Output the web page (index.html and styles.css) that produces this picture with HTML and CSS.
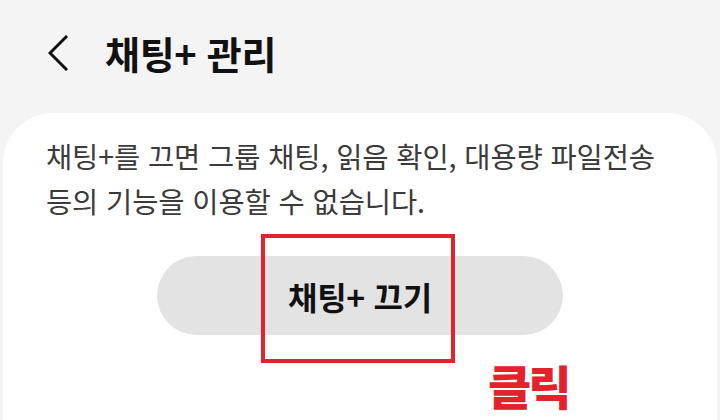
FILE: index.html
```html
<!DOCTYPE html>
<html lang="ko">
<head>
<meta charset="utf-8">
<link rel="stylesheet" href="styles.css">
</head>
<body>
<header class="topbar">
  <svg class="back" width="20" height="36" viewBox="0 0 20 36"><path d="M18 2 L2 18 L18 34" fill="none" stroke="#111" stroke-width="3" stroke-linecap="square" stroke-linejoin="miter"/></svg>
  <h1 class="title">채팅+ 관리</h1>
</header>
<main class="card">
  <p class="desc">채팅+를 끄면 그룹 채팅, 읽음 확인, 대용량 파일전송<br>등의 기능을 이용할 수 없습니다.</p>
  <div class="action">
    <button class="pill">채팅+ 끄기</button>
    <div class="mark"></div>
    <div class="click">클릭</div>
  </div>
</main>
</body>
</html>
```
FILE: styles.css
```css
html, body {
  margin: 0;
  padding: 0;
  width: 720px;
  height: 420px;
  overflow: hidden;
  background: #f4f4f4;
  font-family: "Noto Sans CJK KR", "Noto Sans", sans-serif;
}
.topbar {
  height: 113px;
  box-sizing: border-box;
  padding: 35px 0 0 48px;
  display: flex;
  align-items: flex-start;
  gap: 37px;
}
.back {
  display: block;
}
.title {
  margin: -4px 0 0;
  font-size: 38px;
  line-height: 44px;
  font-weight: 700;
  color: #111;
  letter-spacing: -0.3px;
}
.card {
  margin: 0 3px;
  height: 307px;
  background: #fff;
  border-radius: 50px 50px 0 0;
  box-sizing: border-box;
  padding: 20px 0 0 43px;
}
.desc {
  margin: 0;
  font-size: 28.5px;
  line-height: 45px;
  color: #3b3b3b;
  letter-spacing: -0.1px;
  white-space: nowrap;
}
.action {
  position: relative;
  margin-top: 33px;
  padding-left: 111px;
}
.pill {
  display: block;
  width: 406px;
  height: 79px;
  border: 0;
  border-radius: 40px;
  background: #e3e3e3;
  font-family: inherit;
  font-size: 32px;
  font-weight: 700;
  color: #111;
  padding: 0;
  letter-spacing: -0.3px;
}
.mark {
  position: absolute;
  left: 215px;
  top: -22px;
  width: 186px;
  height: 121px;
  border: 4px solid #e3222b;
}
.click {
  position: absolute;
  left: 442px;
  top: 102px;
  font-size: 47px;
  line-height: 54px;
  font-weight: 900;
  color: #e3222b;
  letter-spacing: -3px;
}
```
